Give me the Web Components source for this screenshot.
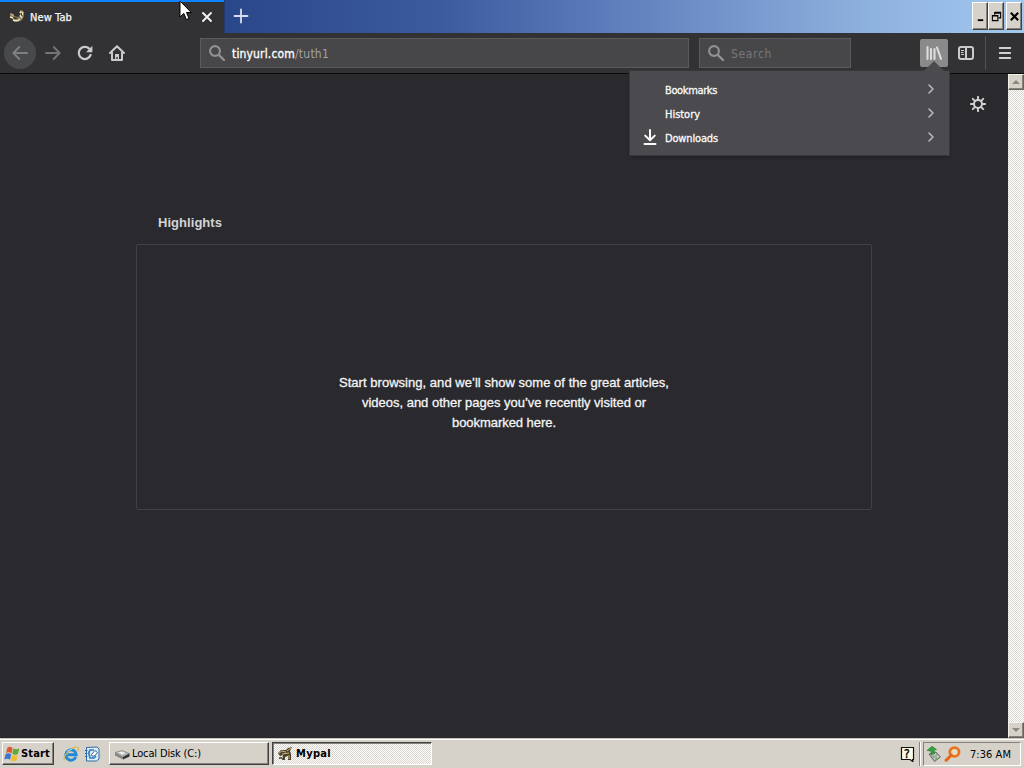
<!DOCTYPE html>
<html lang="en">
<head>
<meta charset="utf-8">
<title>New Tab</title>
<style>
html,body{margin:0;height:100%;overflow:hidden;background:#2a2a2e}
</style>
</head>
<body>
<desktop-screen></desktop-screen>
<script>
const UI = '"DejaVu Sans Condensed","DejaVu Sans","Noto Sans",sans-serif';

function define(name, html, ready) {
  const t = document.createElement('template');
  t.innerHTML = html;
  customElements.define(name, class extends HTMLElement {
    connectedCallback() {
      if (this.shadowRoot) return;
      this.attachShadow({mode: 'open'}).append(t.content.cloneNode(true));
      if (ready) ready(this, this.shadowRoot);
    }
  });
}

/* A single line of text, tracked to a given width. */
define('ui-label', `<style>
:host{display:block;white-space:pre;flex:none;font-stretch:condensed}
span{display:inline-block}
</style><span><slot></slot></span>`, (el, root) => {
  const w = +el.getAttribute('fit');
  if (!w) return;
  const s = root.querySelector('span');
  const n = el.textContent.length;
  s.style.letterSpacing = (w - s.getBoundingClientRect().width) / n + 'px';
});

const icons = {
  mypal: ['0 0 16 16', `<path d="M1 4 4 5 5 7 9 8 11 7 11 3 13 1 15 3 15 7 13 11 9 13 5 12 3 9 1 8Z" fill="#857b5e"/><path d="M1 4 5 6 4 7Z M10 4l2-3 1 3z" fill="#e3d59d"/><path d="M4 8 9 9 6 10Z M12 4 15 5 12 7Z" fill="#1c1a16"/><path d="M4 11q4 2 7-1M11 6l2 3M1 8l3 1M13.500 3v3" stroke="#eee3b5" stroke-width="1.4" fill="none"/>`],
  mypaltask: ['0 0 16 16', `<path d="M1 7 4 4 9 4 11 2 15 1 13 5 14 8 14 14 11 14 11 10 8 11 8 14 5 14 6 9 3 10Z" fill="#4c422c"/><path d="M2 7l3-2 4 1M10 5l4-3M5 8l7-1M12 9v4" stroke="#c6b67d" fill="none"/><path d="M2 11h3v2H2z" fill="#746744"/>`],
  close: ['0 0 12 12', `<path d="M2 2l8 8M10 2l-8 8" stroke="#f2f2f3" stroke-width="1.9" stroke-linecap="round"/>`],
  plus: ['0 0 16 16', `<path d="M8 1.5v13M1.5 8h13" stroke="#d5dcf1" stroke-width="1.8" stroke-linecap="round"/>`],
  back: ['0 0 16 16', `<path d="M15 8H1.8M7.3 2 1.4 8l5.9 6" stroke="#7d7f81" stroke-width="1.9" fill="none" stroke-linecap="round" stroke-linejoin="round"/>`],
  forward: ['0 0 16 16', `<path d="M1 8h13.2M8.7 2l5.9 6-5.9 6" stroke="#737476" stroke-width="1.9" fill="none" stroke-linecap="round" stroke-linejoin="round"/>`],
  reload: ['0 0 16 16', `<path d="M13.6 10A6.1 6.1 0 1 1 12.2 3.6" stroke="#c9cacb" stroke-width="2.2" fill="none" stroke-linecap="round"/><path d="M15.4.8V7.2H9z" fill="#c9cacb"/>`],
  home: ['0 0 16 16', `<path d="M1 8 8 1.2 15 8M3 7.5V15H13V7.5" stroke="#c9cacb" stroke-width="2" fill="none" stroke-linecap="round" stroke-linejoin="round"/><path d="M6 15V9h4v6H8.7v-3H7.3v3z" fill="#c9cacb"/>`],
  search: ['0 0 16 16', `<circle cx="6" cy="6" r="4.9" stroke="#919193" stroke-width="2.1" fill="none"/><path d="M9.8 9.8 15 15" stroke="#919193" stroke-width="2.4" stroke-linecap="round"/>`],
  library: ['0 0 16 16', `<path d="M1.5 2v12M5 4v10M8.500 4v10" stroke="#dcdcdd" stroke-width="2.1" stroke-linecap="round"/><path d="M11 2.500 15 13.8" stroke="#dcdcdd" stroke-width="2.1" stroke-linecap="round"/>`],
  sidebar: ['0 0 16 16', `<rect x="1" y="2" width="14" height="12" rx="2" stroke="#c9cacb" stroke-width="2" fill="none"/><path d="M8 2v12" stroke="#c9cacb" stroke-width="2"/><path d="M3 5.500h3M3 7.500h2.500M3 9.500h3" stroke="#c9cacb"/>`],
  menu: ['0 0 14 14', `<path d="M1.8 2h10.4M1.8 7h10.4M1.8 12h10.4" stroke="#d0d0d1" stroke-width="2" stroke-linecap="round"/>`],
  gear: ['0 0 16 16', `<circle cx="8" cy="8" r="4" stroke="#d2d2d4" stroke-width="2" fill="none"/><path d="M8 .8v3M8 12.2v3M.8 8h3M12.2 8h3M2.8 2.8l2 2M11.2 11.2l2 2M2.8 13.2l2-2M11.2 4.8l2-2" stroke="#d2d2d4" stroke-width="1.9" stroke-linecap="round"/>`],
  download: ['0 0 14 16', `<path d="M7 1v10M2.2 6.6 7 11.2l4.8-4.6M1.5 15h11" stroke="#fafafa" stroke-width="2" fill="none" stroke-linecap="round" stroke-linejoin="round"/>`],
  chevron: ['0 0 8 10', `<path d="M2 1l4 4-4 4" stroke="#b9b9bc" stroke-width="1.6" fill="none" stroke-linecap="round" stroke-linejoin="round"/>`],
  min: ['0 0 12 12', `<path d="M3 9h6v2H3z"/>`],
  restore: ['0 0 12 12', `<path d="M4 2.500h6.500v5H8M4 1.500h7M4 1v3" stroke="#000" stroke-width="1.200" fill="none"/><path d="M1.500 5h6v5.500h-6zM1 5.500h7" stroke="#000" stroke-width="1.200" fill="none"/>`],
  xclose: ['0 0 12 12', `<path d="M2 2l8 8M10 2l-8 8" stroke="#000" stroke-width="2.3"/>`],
  start: ['0 0 16 16', `<path d="M3.500 1.500Q6 0 8.500 2L7.500 7.500Q5 5.500 2 7Z" fill="#dd5a2b"/><path d="M9.300 2.500q3 1.500 6 0l-1.300 5.500q-3 1.300-5.700 0z" fill="#63a83b"/><path d="M1.700 8Q4.500 6.500 7.200 8.300l-1.200 5.500Q3.500 12 .300 13.500z" fill="#3f74cf"/><path d="M8 9q3 1.300 5.700 0l-1.200 5.500q-3 1.500-5.700 0z" fill="#efbf2c"/>`],
  ie: ['0 0 16 16', `<path d="M12.800 11A5.200 5.200 0 1 1 13.200 8.700H4.500" stroke="#2389d4" stroke-width="2.900" fill="none"/><path d="M1.500 14.500C-1 11 9-.500 15 1.500c1 1 .500 2.500-.500 4" stroke="#d9b95a" stroke-width="1.200" fill="none"/><path d="M4 5.500Q6 3 9 3.500" stroke="#8ed3f7" fill="none"/>`],
  mail: ['0 0 16 16', `<path d="M2.500 1.500 13 1l2 2v10l-2.500 2H2.500z" fill="#deedf8" stroke="#2c6ba8"/><path d="M1 4.500h2.500M1 7.500h2.500M1 10.500h2.500" stroke="#2c6ba8" stroke-width="1.200"/><path d="M10 4H6Q4.500 6 5 8t1 4h4l2-2" stroke="#2d7cc4" stroke-width="1.700" fill="none"/><path d="M7.500 8.500 11 4.500l2.500 2-3 3.500H8z" fill="#fff" stroke="#1d568f" stroke-width=".9"/>`],
  disk: ['0 0 16 16', `<path d="M1 6.500 8 4.500 15.500 7.500 9 11z" fill="#b9b9b9" stroke="#777" stroke-width=".600"/><path d="M1 6.500v3l8 4v-2.500z" fill="#858585"/><path d="M9 11 15.500 7.500v3L9 13.500z" fill="#333"/><path d="M4 6.500l4-1L11.500 7 8 8.500z" fill="#eee"/>`],
  help: ['0 0 16 16', `<path d="M2.500 1.500h12v12h-1l.500 2.200-3-2.200h-8.500z" fill="#ffffe8" stroke="#111" stroke-width="1.200"/>`],
  eject: ['0 0 16 16', `<path d="M3 8l7-2 4.500 5-6 4.500z" fill="#a6a8a3" stroke="#5b5c58" stroke-width=".800"/><path d="M6 9l4-1M8 13l5-3" stroke="#e8e8e8"/><path d="M1 4.500 6 .300 10.500 3.500 8 4.200 8.500 8 5 8.500V5z" fill="#33a43a" stroke="#1a7424" stroke-width=".600"/><path d="M9.500 12.800l1.500-1" stroke="#3c3" stroke-width="1.500"/>`],
  lens: ['0 0 16 16', `<circle cx="9.800" cy="6" r="4.400" fill="#f7dfc3" fill-opacity=".6" stroke="#e8731c" stroke-width="2.600"/><path d="M6.800 9.200 2 14.200" stroke="#e26a14" stroke-width="3" stroke-linecap="round"/>`],
  cursor: ['0 0 13 21', `<path d="M1 1v16l3.800-3.600L7.400 19.500l2.600-1.100L7.500 12.500H12.300z" fill="#fff" stroke="#000"/>`],
  up: ['0 0 8 4', `<path d="M0 4 4 0l4 4z" fill="#8b8981"/>`],
  down: ['0 0 8 4', `<path d="M0 0h8L4 4z" fill="#8b8981"/>`]
};
define('ui-icon', `<style>:host{display:block;flex:none;width:16px;height:16px}svg{display:block;width:100%;height:100%}</style>`, (el, root) => {
  const [box, body] = icons[el.getAttribute('name')];
  root.innerHTML += `<svg viewBox="${box}" preserveAspectRatio="none">${body}</svg>`;
});

define('win-button', `<style>
:host{display:flex;box-sizing:border-box;align-items:center;justify-content:center;background:#d6d2ca;border:1px solid;border-color:#fff #404040 #404040 #fff;box-shadow:inset -1px -1px #85827b}
</style><slot></slot>`);

define('title-bar', `<style>
:host{display:flex;height:33px;background:linear-gradient(90deg,#27437f 0,#294789 22%,#3c5b9e 43%,#5877b8 57%,#7293ca 70%,#8eb2de 85%,#a2c8ef 100%)}
.tab{box-sizing:border-box;width:224px;height:33px;background:#323234;border-top:2px solid #0a84ff;display:flex;align-items:center;padding:0 11px 1px 9px;color:#f6f6f7;font:11px/14px ${UI};-webkit-text-stroke:.25px}
.tab ui-label{margin:1px 0 0 5px;flex:1}
.tab ui-icon.x{width:12px;height:12px}
.add{padding:8px 0 0 8px;border-left:1px solid #223a70}
.grow{flex:1}
.ctl{display:flex;padding:2px 2px 0 0}
.ctl win-button{width:16px;height:28px;flex:none}
.ctl .c{margin-left:2px}
.ctl ui-icon{width:11px;height:11px}
</style>
<div class="tab"><ui-icon name="mypal"></ui-icon><ui-label fit="42">New Tab</ui-label><ui-icon class="x" name="close"></ui-icon></div>
<div class="add"><ui-icon name="plus"></ui-icon></div><div class="grow"></div>
<div class="ctl"><win-button><ui-icon name="min"></ui-icon></win-button><win-button><ui-icon name="restore"></ui-icon></win-button><win-button class="c"><ui-icon name="xclose"></ui-icon></win-button></div>`);

define('nav-bar', `<style>
:host{display:flex;box-sizing:border-box;height:41px;background:#323234;border-bottom:1px solid #0b0b0c;align-items:center;padding:0 12px 0 4px}
.back{width:32px;height:32px;border-radius:50%;background:#48494b;display:grid;place-items:center;flex:none}
.fwd{margin-left:9px}.rel{margin-left:16px}.home{margin-left:16px}
.field{box-sizing:border-box;height:30px;border:1px solid #5a5b5b;background:#474749;display:flex;align-items:center;padding-left:8px;font:12px/16px ${UI};color:#a0a0a2;flex:none}
.field ui-label{margin-top:2px}
.url{width:489px;margin-left:75px}.find{width:152px;margin-left:10px;color:#77777a}
.field ui-label.a{margin-left:7px}
.host{color:#fafafa;-webkit-text-stroke:.35px}
.lib{width:28px;height:28px;border-radius:2px;background:#8a8a8b;display:grid;place-items:center;margin-left:69px;flex:none}
.side{margin-left:10px}.sep{width:1px;height:34px;background:#525355;margin:0 12px 0 11px}
</style>
<div class="back"><ui-icon name="back"></ui-icon></div><ui-icon class="fwd" name="forward"></ui-icon><ui-icon class="rel" name="reload"></ui-icon><ui-icon class="home" name="home"></ui-icon>
<div class="field url"><ui-icon name="search"></ui-icon><ui-label class="a host" fit="63">tinyurl.com</ui-label><ui-label fit="34">/tuth1</ui-label></div>
<div class="field find"><ui-icon name="search"></ui-icon><ui-label class="a" fit="41">Search</ui-label></div>
<div class="lib"><ui-icon name="library"></ui-icon></div><ui-icon class="side" name="sidebar"></ui-icon><div class="sep"></div><ui-icon name="menu" style="width:14px;height:14px"></ui-icon>`);

define('menu-row', `<style>
:host{display:flex;height:24px;align-items:center;padding:0 14px 0 13px;font:11px/14px ${UI};color:#fafafa;-webkit-text-stroke:.3px}
.i{width:22px;flex:none}.i slot{display:block;margin-top:-2px}.t{flex:1;padding-top:1px}ui-icon{width:8px;height:10px;margin-bottom:2px}
</style><div class="i"><slot name="icon"></slot></div><div class="t"><slot></slot></div><ui-icon name="chevron"></ui-icon>`);

define('library-menu', `<style>
:host{position:absolute;left:630px;top:71px;box-sizing:border-box;width:319px;height:84px;padding:7px 0 0;background:#4a4a4f;box-shadow:0 0 0 1px #38383c,0 2px 3px #0004}
:host::before{content:"";position:absolute;left:294px;top:-10px;border:10px solid transparent;border-top:0;border-bottom-color:#4a4a4f}
</style>
<menu-row><ui-label fit="52">Bookmarks</ui-label></menu-row>
<menu-row><ui-label fit="35">History</ui-label></menu-row>
<menu-row><ui-icon slot="icon" name="download" style="width:14px;height:16px"></ui-icon><ui-label fit="53">Downloads</ui-label></menu-row>`);

define('scroll-bar', `<style>
:host{display:flex;flex-direction:column;justify-content:space-between;width:16px;background:repeating-conic-gradient(#fff 0 25%,#d9d6cd 0 50%) 0 0/2px 2px}
win-button{width:16px;height:16px;border-color:#f2f0ea #66645f #66645f #f2f0ea}ui-icon{width:8px;height:4px}
</style><win-button><ui-icon name="up"></ui-icon></win-button><win-button><ui-icon name="down"></ui-icon></win-button>`);

define('new-tab-page', `<style>
:host{display:flex;height:664px;background:#2a2a2e;color:#f4f4f5;font:13px/20px "Liberation Sans",Arial,sans-serif}
main{flex:1;padding:139px 136px 0;box-sizing:border-box;display:flex;flex-direction:column}
h2{margin:0 0 11px 22px;font-size:13px;line-height:20px;color:#d3d3d5}
.empty{box-sizing:border-box;width:736px;height:266px;border:1px solid #414145;border-radius:2px;display:flex;flex-direction:column;align-items:center;padding-top:128px;-webkit-text-stroke:.3px}
.gear{position:absolute;left:970px;top:96px}
</style><main><h2><ui-label fit="64">Highlights</ui-label></h2>
<div class="empty"><ui-label fit="330">Start browsing, and we’ll show some of the great articles,</ui-label><ui-label fit="284">videos, and other pages you’ve recently visited or</ui-label><ui-label fit="104">bookmarked here.</ui-label></div></main>
<ui-icon class="gear" name="gear"></ui-icon><scroll-bar></scroll-bar>`);

define('task-bar', `<style>
:host{display:flex;box-sizing:border-box;height:30px;background:#d6d2ca;border-top:1px solid #c9c5bd;box-shadow:inset 0 1px #fff;padding:3px 3px 0 2px;color:#000;font:11px/14px ${UI}}
win-button{height:23px;justify-content:flex-start;flex:none}
.start{width:52px;padding-left:1px;font-weight:700}
.ie{margin:4px 0 0 9px}.ml{margin:4px 0 0 5px}
.disk{width:160px;margin-left:9px;padding-left:4px}.disk ui-label{margin-left:2px}
.my{width:160px;margin-left:3px;padding:1px 0 0 4px;font-weight:700;background:repeating-conic-gradient(#fff 0 25%,#d8d4cc 0 50%) 0 0/2px 2px;border-color:#404040 #fff #fff #404040;box-shadow:inset 1px 1px #85827b}
.my ui-label{margin-left:3px}
.grow{flex:1}
.help{position:relative;width:16px;height:16px;margin-top:4px;text-align:center}
.help span{position:absolute;left:5px;top:1px;font-size:12px;-webkit-text-stroke:.4px}
.sep{width:1px;height:24px;background:#87847e;box-shadow:1px 0 #fff;margin:0 3px 0 4px}
.tray{box-sizing:border-box;width:98px;height:24px;border:1px solid;border-color:#85827b #fff #fff #85827b;display:flex;align-items:center;padding-left:2px}
.tray ui-label{margin:1px 0 0 9px}
</style>
<win-button class="start"><ui-icon name="start"></ui-icon><ui-label fit="29" style="margin-left:1px">Start</ui-label></win-button>
<ui-icon class="ie" name="ie"></ui-icon><ui-icon class="ml" name="mail"></ui-icon>
<win-button class="disk"><ui-icon name="disk"></ui-icon><ui-label fit="69">Local Disk (C:)</ui-label></win-button>
<win-button class="my"><ui-icon name="mypaltask"></ui-icon><ui-label fit="35">Mypal</ui-label></win-button>
<div class="grow"></div><div class="help"><ui-icon name="help"></ui-icon><span>?</span></div><div class="sep"></div>
<div class="tray"><ui-icon name="eject"></ui-icon><ui-icon name="lens" style="margin-left:2px;width:17px"></ui-icon><ui-label fit="41">7:36 AM</ui-label></div>`);

define('desktop-screen', `<style>
:host{display:flex;flex-direction:column;position:relative;width:1024px;height:768px;overflow:hidden}
.cursor{position:absolute;left:179px;top:0;width:13px;height:21px}
</style><title-bar></title-bar><nav-bar></nav-bar><new-tab-page></new-tab-page><task-bar></task-bar><library-menu></library-menu><ui-icon class="cursor" name="cursor"></ui-icon>`);
</script>
</body>
</html>
